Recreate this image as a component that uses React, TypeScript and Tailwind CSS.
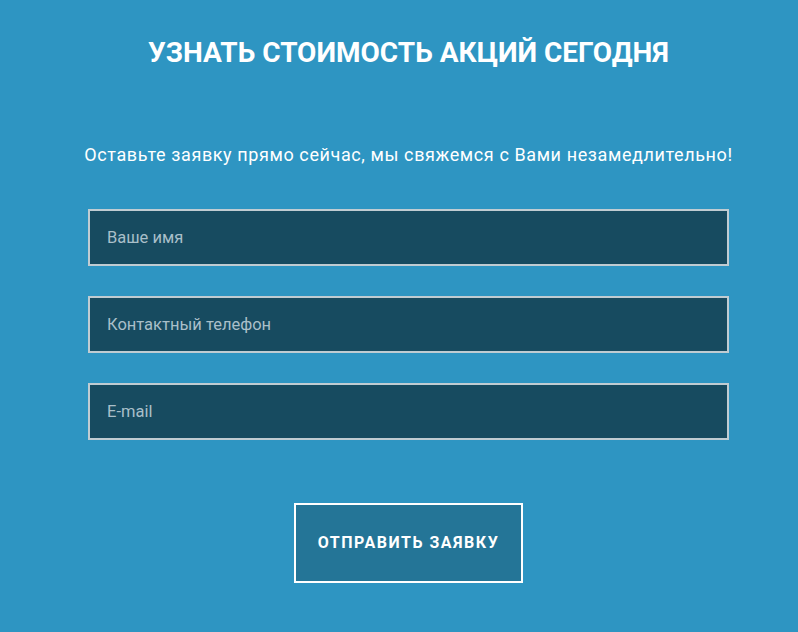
export default function App() {
  const fields = ['Ваше имя', 'Контактный телефон', 'E-mail'];
  return (
    <div className="min-h-[632px] w-full bg-[#2e95c2] font-['Roboto',sans-serif] text-white">
      <div className="ml-[88px] w-[641px] pt-[35px] flex flex-col items-center">
        <h1 className="text-[28px] font-bold leading-[36px] uppercase">Узнать стоимость акций сегодня</h1>
        <p className="mt-[73px] text-[18px] leading-[22px] tracking-[0.6px] whitespace-nowrap">
          Оставьте заявку прямо сейчас, мы свяжемся с Вами незамедлительно!
        </p>
        <form className="mt-[43px] w-full flex flex-col gap-[30px]" onSubmit={(e) => e.preventDefault()}>
          {fields.map((f) => (
            <input
              key={f}
              placeholder={f}
              className="h-[57px] w-full border-2 border-[#c0ccd2] bg-[#174b60] px-[17px] text-[16.5px] text-white placeholder:text-[#a9bfc9] outline-none"
            />
          ))}
          <button
            type="submit"
            className="mt-[33px] self-center h-[80px] w-[229px] border-2 border-white bg-[#247597] text-[16px] font-bold uppercase tracking-[1.5px]"
          >
            Отправить заявку
          </button>
        </form>
      </div>
    </div>
  );
}
